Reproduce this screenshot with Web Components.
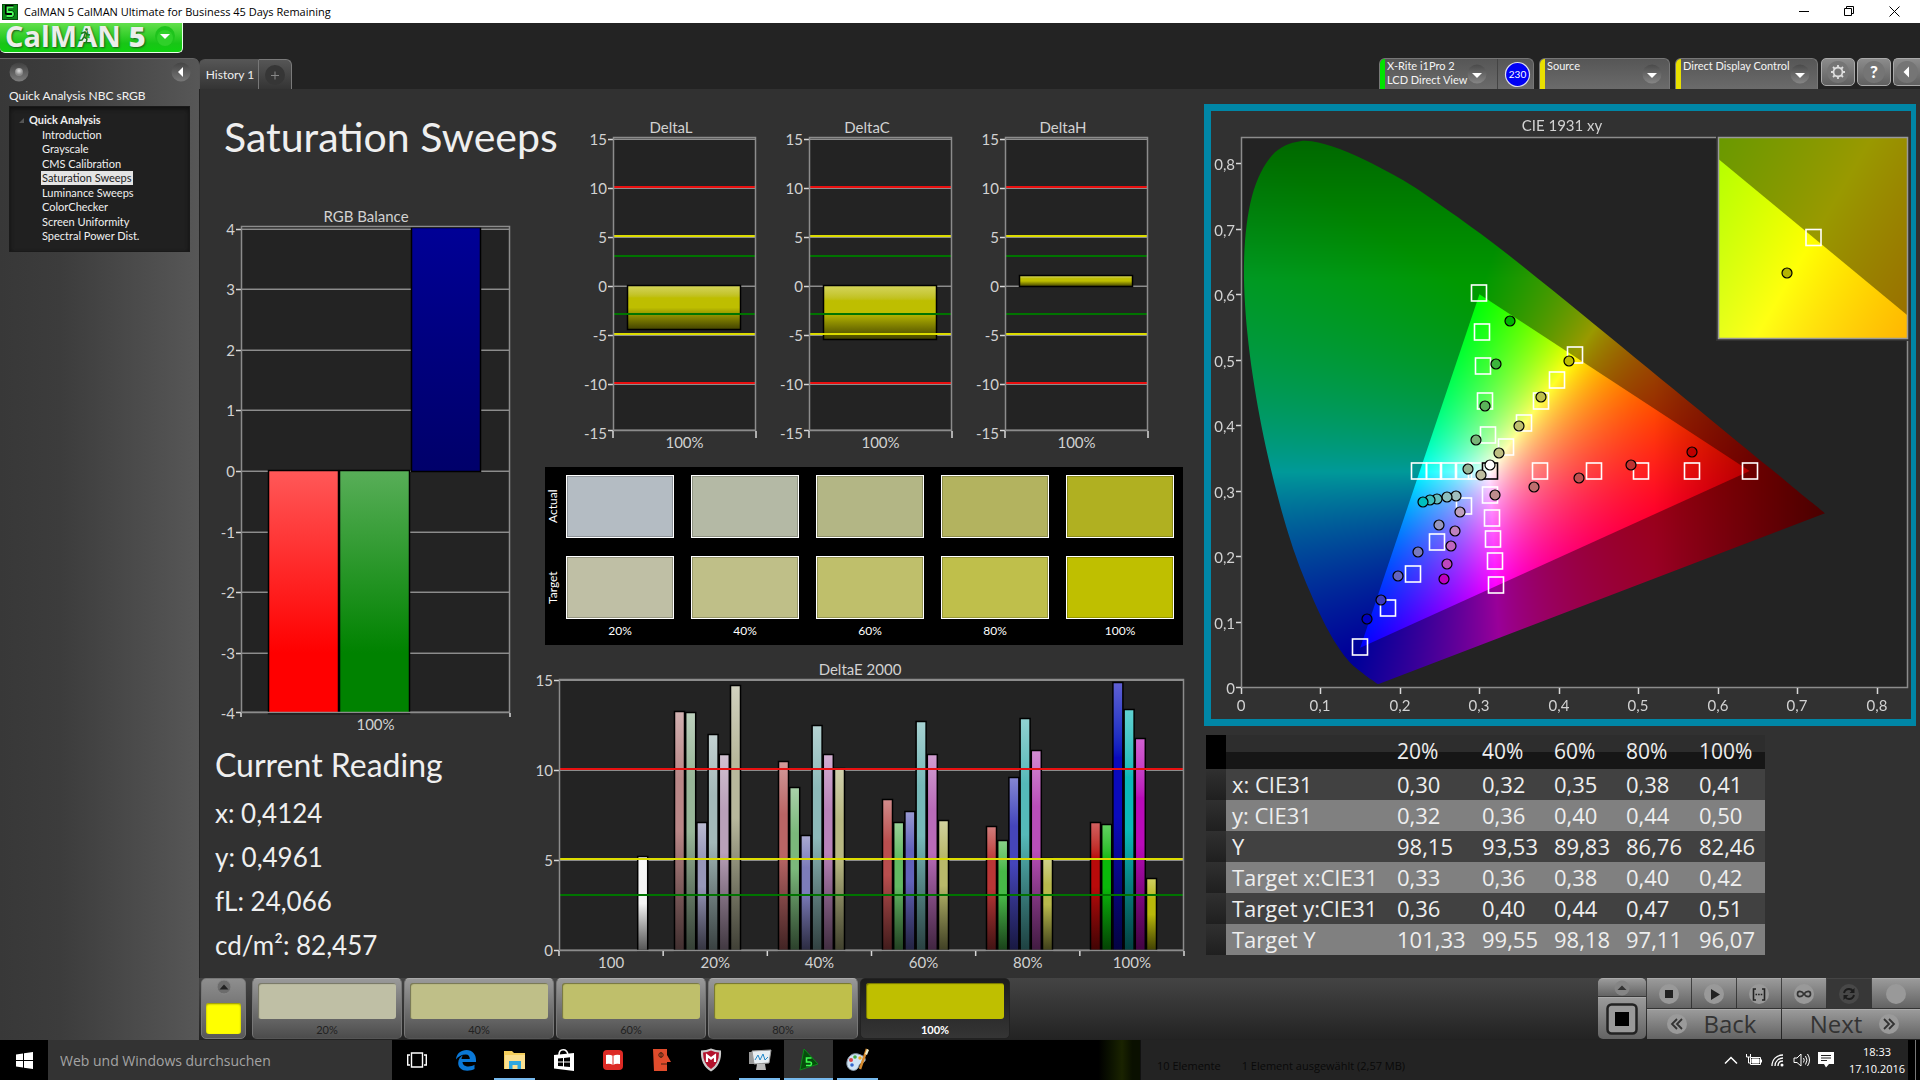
<!DOCTYPE html>
<html lang="en">
<head>
<meta charset="utf-8">
<title>CalMAN 5 CalMAN Ultimate for Business 45 Days Remaining</title>
<style>
  html, body { margin: 0; height: 100%; background: #000; }
  body { font-family: Lato, "Open Sans", sans-serif; color: #eee; overflow: hidden; }
</style>
</head>
<body>
<calman-app></calman-app>
<script>
const define = (name, css, html, init) => {
  const tpl = document.createElement('template');
  tpl.innerHTML = `<style>*{box-sizing:border-box}button{font:inherit;color:inherit;margin:0;padding:0;border:0;background:none}${css}</style>${html}`;
  customElements.define(name, class extends HTMLElement {
    constructor() {
      super();
      this.attachShadow({ mode: 'open' }).append(tpl.content.cloneNode(true));
    }
    connectedCallback() { if (init && !this.ready) { this.ready = true; init.call(this, this.shadowRoot); } }
  });
};

/* ---------- window title bar ---------- */
define('title-bar', `
  :host{display:flex;align-items:center;height:23px;background:#fff;color:#000;font:12px "Open Sans",sans-serif;padding-right:3px}
  .ico{width:16px;height:16px;margin:0 6px 0 2px}
  span{flex:1;font-size:11px}
  button{width:45px;height:23px;display:grid;place-items:center}
`, `
  <svg class="ico" viewBox="0 0 16 16"><rect width="16" height="16" fill="#064d0c"/><rect x="1" y="1" width="14" height="14" fill="#0a8a18"/><path d="M11.500 3H5v5.500h4.200q1.300 0 1.300 1.500t-1.300 1.500H4.500" fill="none" stroke="#000" stroke-width="4"/><path d="M11.500 3.500H5.500V8h4q1.500 0 1.500 2t-1.500 2H4.500" fill="none" stroke="#4dff5c" stroke-width="1.800"/></svg>
  <span>CalMAN 5 CalMAN Ultimate for Business 45 Days Remaining</span>
  <button aria-label="Minimize"><svg width="11" height="11"><path d="M0 5.500h10" stroke="#000"/></svg></button>
  <button aria-label="Restore"><svg width="11" height="11" fill="none" stroke="#000"><path d="M.5 2.500h7v7h-7zM2.500 2.500v-2h7v7h-2"/></svg></button>
  <button aria-label="Close"><svg width="11" height="11" fill="none" stroke="#000"><path d="M.5.5l10 10M10.500.5l-10 10"/></svg></button>
`);

/* ---------- brand menu ---------- */
define('brand-menu', `
  :host{display:block;height:35px}
  button{display:flex;align-items:center;width:183px;height:30px;padding:0 6px 4px 5px;background:linear-gradient(#63df4c,#18c516 70%,#0fd00f);border:1px solid #e8ffe8;border-top:0;border-left:0;border-radius:0 0 5px 5px}
  .name{position:relative;flex:1;display:flex;align-items:center;gap:8px;font:700 29px/26px "Open Sans",sans-serif;color:#eceeea;text-shadow:1px 1px 2px #1c5a1c}
  .run{position:absolute;left:72px;top:4px}
  .five{font-weight:800}
`, `
  <button aria-label="CalMAN 5 menu"><span class="name"><span>CalMAN</span><span class="five">5</span>
  <svg class="run" width="16" height="18" viewBox="0 0 16 18" fill="none" stroke="#1c7a20" stroke-width="1.500"><circle cx="9.500" cy="2.500" r="1.300" fill="#1c7a20" stroke="none"/><path d="M4 6.500l4-1.500 2 2.500 3 .5M8.500 5.500L7 10l3 2-1 4M7 10l-2 3-3.500.5"/></svg></span>
  <svg width="22" height="22" viewBox="0 0 22 22"><circle cx="11" cy="11" r="10" fill="#1ec41c"/><circle cx="11" cy="13" r="8" fill="#3fdc36" opacity=".5"/><path d="M6 9h10l-5 5z" fill="#fff"/></svg></button>
`);

/* ---------- workflow tree ---------- */
define('workflow-tree', `
  :host{display:block;width:199px;background:linear-gradient(90deg,#383838,#3c3c3c 30%,#575757);border-top:1px solid #666;border-radius:0 6px 0 0}
  .top{display:flex;justify-content:space-between;padding:3px 8px 0 9px;height:28px}
  .top button{width:20px;height:20px}
  h2{margin:0;padding:0 9px;font:12px/18px Lato,sans-serif;color:#f2f2f2}
  nav{margin:1px 9px 0;height:146px;background:#202020;border:1px solid #1a1a1a;box-shadow:inset 0 2px 4px #101010;padding:5px 0 5px 13px}
  .head{display:flex;align-items:center;gap:5px;font:700 11px/16px Lato,sans-serif}
  ul{list-style:none;margin:0;padding:0 0 0 18px;height:115px;display:flex;flex-direction:column;justify-content:space-between;align-items:flex-start}
  a{display:block;color:#f0f0f0;text-decoration:none;font:11px/14px Lato,sans-serif;padding:0 1px}
  a[aria-current]{background:#e4e4e4;color:#222}
`, `
  <div class="top">
    <button aria-label="Record"><svg width="20" height="20"><defs><linearGradient id="a" x2="0" y2="1"><stop stop-color="#404040"/><stop offset="1" stop-color="#7c7c7c"/></linearGradient><radialGradient id="b" cy=".35"><stop stop-color="#ddd"/><stop offset="1" stop-color="#888"/></radialGradient></defs><circle cx="10" cy="10" r="9.500" fill="url(#a)"/><circle cx="10" cy="10" r="4" fill="url(#b)"/></svg></button>
    <button aria-label="Collapse"><svg width="20" height="20"><defs><linearGradient id="c" x2="0" y2="1"><stop stop-color="#444"/><stop offset="1" stop-color="#777"/></linearGradient></defs><circle cx="10" cy="10" r="9.500" fill="url(#c)"/><path d="M12 5v10l-5-5z" fill="#fff"/></svg></button>
  </div>
  <h2>Quick Analysis NBC sRGB</h2>
  <nav><div class="head"><svg width="5" height="5" style="margin-left:-4px"><path d="M5 0v5H0z" fill="#555"/></svg><span>Quick Analysis</span></div>
  <ul><li><a href="#">Introduction</a></li><li><a href="#">Grayscale</a></li><li><a href="#">CMS Calibration</a></li><li><a href="#" aria-current="page">Saturation Sweeps</a></li><li><a href="#">Luminance Sweeps</a></li><li><a href="#">ColorChecker</a></li><li><a href="#">Screen Uniformity</a></li><li><a href="#">Spectral Power Dist.</a></li></ul></nav>
`);

/* ---------- device picker: coloured strip + label + drop arrow ---------- */
define('device-picker', `
  :host{display:flex;height:31px;background:linear-gradient(#565656,#6b6b6b);border:1px solid #777;border-bottom:0;border-radius:6px 6px 0 0;overflow:hidden}
  button{flex:1;display:flex;text-align:left;font:11px/14px Lato,sans-serif;color:#f4f4f4}
  i{width:5px;align-self:stretch;background:var(--strip,#e8e000);margin-right:2px}
  .t{flex:1;align-self:flex-start;white-space:nowrap}
  svg{align-self:center;margin:0 var(--arrow,7px) 0 0}
`, `
  <button><i></i><span class="t"><slot></slot></span><svg width="20" height="20"><defs><linearGradient id="a" x2="0" y2="1"><stop stop-color="#4a4a4a"/><stop offset="1" stop-color="#858585"/></linearGradient></defs><circle cx="10" cy="10" r="9.500" fill="url(#a)"/><path d="M5 9h10l-5 5z" fill="#fff"/></svg></button><slot name="extra"></slot>
`);

define('top-strip', `
  :host{display:flex;height:31px;align-items:flex-end;background:#232323}
  .tabs{display:flex;flex:1}
  .tab{height:30px;background:linear-gradient(#565656,#343434);border:1px solid #7a7a7a;border-bottom:0;font:12px/28px Lato,sans-serif;color:#eee}
  .tab:first-child{width:60px;padding-left:2px;border-radius:6px 0 0 0;border-color:#555 #777 #555 #555}
  .tab:last-child{width:33px;border-left:0;border-radius:0 6px 0 0;display:grid;place-items:center}
  .right{display:flex;gap:5px}
  .badge{width:37px;border-left:1px solid #444;display:grid;place-items:center;padding-left:4px}
  .tools{display:flex;gap:2px;margin-left:-2px}
  .tools button{width:34px;height:28px;border:1px solid #aaa;border-radius:5px;background:linear-gradient(#8c8c8c,#606060);display:grid;place-items:center}
  .tools button:last-child{width:27px;border-right:0;border-radius:5px 0 0 5px}
`, `
  <div class="tabs"><button class="tab">History 1</button><button class="tab" aria-label="Add history"><svg width="22" height="22"><circle cx="11" cy="11" r="10" fill="#363636"/><path d="M11 7.500v8M7 11.500h8" stroke="#888"/></svg></button></div>
  <div class="right">
    <device-picker style="--strip:#00e400;--arrow:10px;width:155px">X-Rite i1Pro 2<br>LCD Direct View<span slot="extra" class="badge"><svg width="27" height="27"><circle cx="13.500" cy="13.500" r="12" fill="#0000f5" stroke="#dde" stroke-width="1.200"/><text x="13.500" y="17" font-family="Lato" font-size="10" fill="#fff" text-anchor="middle">230</text></svg></span></device-picker>
    <device-picker style="width:131px">Source</device-picker>
    <device-picker style="width:143px;--arrow:10px">Direct Display Control</device-picker>
    <div class="tools">
      <button aria-label="Settings"><svg width="24" height="24"><circle cx="12" cy="12" r="11" fill="#757575"/><circle cx="12" cy="12" r="4.500" fill="none" stroke="#ddd" stroke-width="1.800"/><path d="M12 5v2.500M12 16.500V19M5 12h2.500M16.500 12H19M7 7l2 2M15 15l2 2M7 17l2-2M15 9l2-2" stroke="#ddd" stroke-width="1.800"/></svg></button>
      <button aria-label="Help"><svg width="24" height="24"><circle cx="12" cy="12" r="11" fill="#757575"/><text x="12" y="18" font-family="Lato" font-weight="900" font-size="17" fill="#fff" text-anchor="middle">?</text></svg></button>
      <button aria-label="Expand"><svg width="24" height="24"><circle cx="12" cy="12" r="11" fill="#757575"/><path d="M14 6.500v11L8.500 12z" fill="#fff"/></svg></button>
    </div>
  </div>
`);

/* ---------- bar charts ---------- */
const LIMITS = [[10, '#e81010'], [5, '#dcdc00'], [3, '#007400']];
const delta = (title, v) => ({
  w: 196, h: 340, title, tx: 99, plot: [41, 22, 184, 316], zero: 171, unit: 9.8, min: -15, max: 15, step: 5,
  cats: ['100%'], bars: [[14, 114, v, '#bebe00']], limits: LIMITS.concat([[-3, '#007400'], [-5, '#dcdc00'], [-10, '#e81010']]), tail: 7
});
const SWEEP = [
  [null, null, null, null, null, null, 5.2],
  [13.3, 13.2, 7.1, 12, 10.9, 14.7], [10.5, 9.05, 6.4, 12.5, 10.9, 10.1], [8.4, 7.1, 7.7, 12.7, 10.9, 7.2],
  [6.9, 6.1, 9.6, 12.9, 11.1, 5.1], [7.1, 7, 14.9, 13.4, 11.8, 4]
];
const HUES = [
  ['#fff', '#fff', '#fff', '#fff', '#fff', '#fff', '#f4f4f4'],
  ['#b98787', '#98b698', '#9797b9', '#a3b9b9', '#b9a0b9', '#b8b89c'], ['#b96565', '#7bb87b', '#7c7cba', '#8cb9b9', '#b983b9', '#b8b882'],
  ['#b94e4e', '#62b962', '#6262ba', '#76b9b9', '#b96bb9', '#b8b86a'], ['#b93636', '#48b948', '#4545ba', '#55b9b9', '#b94eb9', '#b8b84c'],
  ['#b90a0a', '#0ab90a', '#0a0abc', '#0ab9b9', '#b90ab9', '#b8b80a']
];
const CHARTS = {
  rgb: { w: 300, h: 530, title: 'RGB Balance', tx: 151, plot: [26, 21, 295, 508], zero: 266, unit: 60.6, min: -4, max: 4, step: 1, cats: ['100%'],
    bars: [[27, 71, -4.2, '#ff0000', '#ff5858', '#ff0000'], [98, 71, -4.2, '#008200', '#58ae58', '#008200'], [170, 70, 4.1, '#00007e', '#000096', '#00006a']], limits: [], tail: 4 },
  l: delta('DeltaL', -4.4), c: delta('DeltaC', -5.4), h: delta('DeltaH', 1.1),
  e: { w: 660, h: 315, title: 'DeltaE 2000', tx: 330, plot: [29, 24, 654, 296], zero: 295, unit: 18, min: 0, max: 15, step: 5, cats: ['100', '20%', '40%', '60%', '80%', '100%'],
    bars: SWEEP.flatMap((g, c) => g.map((v, i) => v && [c * 104 + 11 + i * 11.2, 11, v, HUES[c][i]]).filter(Boolean)), limits: LIMITS, tail: 5 }
};
define('bar-chart', `:host{display:block}svg{display:block;width:100%;height:auto}text{font:15px Lato,sans-serif;fill:#d2d2d2}`, ``, function (root) {
  const c = CHARTS[this.getAttribute('data-set')];
  const [l, t, r, b] = c.plot;
  const Y = v => Math.round(c.zero - v * c.unit);
  let s = `<text x="${c.tx}" y="${t - 4}" text-anchor="middle">${c.title}</text><rect x="${l}" y="${t}" width="${r - l}" height="${b - t}" fill="#232323"/>`, defs = '';
  for (let v = c.min; v <= c.max; v += c.step) {
    const y = Math.min(Y(v), b - 1);
    s += `<path d="M${l} ${y + .5}h${r - l}" stroke="#8c8c8c"/><path d="M${l} ${y - .5}h${r - l}" stroke="#545454"/><path d="M${l - 5} ${y + .5}h5" stroke="#d8d8d8" stroke-width="1.500"/><text x="${l - 6}" y="${Y(v) + 6}" text-anchor="end">${v}</text>`;
  }
  c.bars.forEach(([x, w, v, col, hi, lo], i) => {
    const top = Math.max(t + 1, v > 0 ? Y(v) : Y(0) - 1), bot = Math.min(b, v > 0 ? Y(0) : Y(v));
    const L = hi || `color-mix(in srgb, ${col} 65%, #fff)`, D = lo || `color-mix(in srgb, ${col} 35%, #000)`;
    defs += `<linearGradient id="g${i}" x2="0" y2="1"><stop style="stop-color:${L}"/><stop offset="${hi ? (v < 0 ? .75 : .5) : .28}" stop-color="${col}"/><stop offset="${hi ? 1 : .5}" stop-color="${hi ? lo : col}"/><stop offset="1" style="stop-color:${D}"/></linearGradient>`;
    s += `<rect x="${l + x + .5}" y="${top + .5}" width="${w - 1}" height="${bot - top}" fill="url(#g${i})" stroke="#000" stroke-width="1.500"/>`;
  });
  c.limits.forEach(([v, col]) => { s += `<path d="M${l} ${Y(v) - 1}h${r - l}" stroke="${col}" stroke-width="2"/>`; });
  s += `<rect x="${l + .5}" y="${t + .5}" width="${r - l - 1}" height="${b - t - 1}" fill="none" stroke="#8c8c8c" stroke-width="1.500"/>`;
  const cw = (r - l) / c.cats.length;
  c.cats.forEach((n, i) => { s += `<text x="${l + cw * (i + .5)}" y="${b + 17}" text-anchor="middle">${n}</text>`; });
  for (let i = 0; i <= c.cats.length; i++) s += `<path d="M${l + cw * i} ${b}v${c.tail}" stroke="#d8d8d8" stroke-width="1.500"/>`;
  root.innerHTML += `<svg viewBox="0 0 ${c.w} ${c.h}" role="img" aria-label="${c.title}"><defs>${defs}</defs>${s}</svg>`;
});

/* ---------- actual / target swatches ---------- */
define('swatch-panel', `
  :host{display:grid;grid-template-columns:4px repeat(5,1fr);column-gap:17px;row-gap:18px;grid-template-rows:63px 63px 14px;background:#000;padding:8px 9px 6px 0;font:12px/14px Lato,sans-serif;color:#fff;height:178px}
  .v{writing-mode:vertical-rl;transform:rotate(180deg);text-align:center;line-height:16px;width:16px}
  .n{text-align:center;margin-top:-13px}
  i{border:1px solid #fff;box-shadow:inset 0 0 0 1px #0003}
`, ``, function (root) {
  const rows = [['Actual', '#b4bcc3', '#b4b9a5', '#b3b685', '#b3b35f', '#b0b021'], ['Target', '#bfbfa5', '#bfbf88', '#bfbf6b', '#bfbf4b', '#bfbf00']];
  root.innerHTML += rows.map(([n, ...c]) => `<span class="v">${n}</span>` + c.map(k => `<i style="background:${k}"></i>`).join('')).join('')
    + '<span></span>' + ['20%', '40%', '60%', '80%', '100%'].map(n => `<span class="n">${n}</span>`).join('');
});

/* ---------- CIE 1931 diagram ---------- */
const LOCUS = [.1741,.0050,.1714,.0051,.1644,.0109,.1566,.0177,.1440,.0297,.1355,.0399,.1241,.0578,.1096,.0868,.0913,.1327,.0687,.2007,.0454,.2950,.0235,.4127,.0082,.5384,.0039,.6548,.0139,.7502,.0389,.8120,.0743,.8338,.1142,.8262,.1547,.8059,.1929,.7816,.2296,.7543,.3016,.6923,.3731,.6245,.4441,.5547,.5125,.4866,.5752,.4242,.6270,.3725,.6658,.3340,.6915,.3083,.7190,.2809,.7347,.2653];
const TARGETS = [[.299,.602],[.303,.543],[.305,.491],[.307,.437],[.311,.385],[.42,.507],[.397,.469],[.377,.437],[.356,.403],[.333,.367],[.224,.33],[.243,.33],[.261,.33],[.28,.33],[.296,.33],[.376,.33],[.444,.33],[.503,.33],[.568,.33],[.64,.33],[.281,.2765],[.247,.2215],[.217,.172],[.185,.12],[.15,.061],[.3137,.294],[.3154,.258],[.317,.226],[.3195,.1925],[.3206,.156]];
const ACTUALS = [[.3385,.559,'#00b400'],[.3206,.493,'#3cb43c'],[.3068,.43,'#5ab45a'],[.296,.377,'#78b478'],[.286,.333,'#96b496'],[.4125,.498,'#bebe00'],[.377,.443,'#bebe4b'],[.35,.399,'#bebe6e'],[.3247,.357,'#bebe82'],[.3016,.324,'#bebea0'],[.568,.3595,'#be0000'],[.491,.339,'#be3232'],[.425,.319,'#be5050'],[.3686,.3055,'#be6e6e'],[.3195,.294,'#be8c8c'],[.1589,.104,'#0000be'],[.176,.133,'#3c3cbe'],[.1976,.1696,'#6464be'],[.223,.206,'#7878be'],[.249,.247,'#9696be'],[.2553,.165,'#be00be'],[.2594,.188,'#be46be'],[.264,.2154,'#be64be'],[.2698,.238,'#be82be'],[.2756,.267,'#bea0be'],[.27,.292,'#a0bebe'],[.2594,.29,'#8cbebe'],[.2467,.2877,'#64bebe'],[.238,.286,'#3cbebe'],[.2293,.283,'#00bebe'],[.3137,.339,'#ffffff']];
define('cie-diagram', `
  :host{display:grid;border:7px solid #0086a6;border-right-width:5px;background:#313131}
  canvas,svg{grid-area:1/1;display:block;width:100%;height:auto}
  text{font:15px Lato,sans-serif;fill:#d2d2d2}
`, `<canvas width="700" height="608"></canvas>`, function (root) {
  const cv = root.querySelector('canvas'), g = cv.getContext('2d');
  /* paints one view of the chromaticity plane: ux, uy are pixels per unit, ox, oy the pixel of the origin */
  const paint = (x0, y0, w, h, ox, oy, ux, uy, clipLocus) => {
    const layer = k => {
      const o = document.createElement('canvas'); o.width = w; o.height = h;
      const q = o.getContext('2d'), im = q.createImageData(w, h);
      for (let j = 0, p = 0; j < h; j++) for (let i = 0; i < w; i++, p += 4) {
        const x = (x0 + i + .5 - ox) / ux, y = Math.max((oy - y0 - j - .5) / uy, .001), z = 1 - x - y;
        const R = Math.max(0, 3.2406 * x - 1.5372 * y - .4986 * z), G = Math.max(0, -.9689 * x + 1.8758 * y + .0415 * z), B = Math.max(0, .0557 * x - .2040 * y + 1.0570 * z);
        /* the far red and the far green end both fade towards dark */
        const fade = Math.min(1, 1 - (x - .52) * 2.4) * Math.min(1, 1 - (y - .62) * 1.5);
        const m = 255 * k * fade / Math.max(R, G, B, .0001);
        im.data[p] = R * m; im.data[p + 1] = G * m; im.data[p + 2] = B * m; im.data[p + 3] = 255;
      }
      q.putImageData(im, 0, 0); return o;
    };
    const P = (x, y) => [ox + x * ux, oy - y * uy];
    g.save(); g.beginPath(); g.rect(x0, y0, w, h); g.clip();
    if (clipLocus) {
      const n = LOCUS.length / 2, pt = i => { i = Math.max(0, Math.min(n - 1, i)); return P(LOCUS[2 * i], LOCUS[2 * i + 1]); };
      g.beginPath(); g.moveTo(...pt(0));
      for (let i = 0; i < n - 1; i++) {
        const a = pt(i - 1), b = pt(i), c = pt(i + 1), d = pt(i + 2);
        g.bezierCurveTo(b[0] + (c[0] - a[0]) / 6, b[1] + (c[1] - a[1]) / 6, c[0] - (d[0] - b[0]) / 6, c[1] - (d[1] - b[1]) / 6, c[0], c[1]);
      }
      g.closePath(); g.clip();
    }
    g.drawImage(layer(.6), x0, y0);
    g.beginPath(); g.moveTo(...P(.64, .33)); g.lineTo(...P(.3, .6)); g.lineTo(...P(.15, .06)); g.closePath(); g.clip();
    g.drawImage(layer(1), x0, y0);
    g.restore();
  };
  g.fillStyle = '#232323'; g.fillRect(30, 26, 667, 550);
  paint(30, 26, 667, 550, 30, 576, 794.8, 654.6, true);
  g.fillStyle = '#313131'; g.fillRect(505, 25, 195, 205);
  const ux = 3790, uy = 3950;
  paint(508, 26, 189, 201, 602.5 - .4193 * ux, 126.5 + .5053 * uy, ux, uy, false);
  const X = x => Math.round(30 + x * 794.8), Y = y => Math.round(576 - y * 654.6);
  const sq = (x, y, c) => `<rect x="${x - 7.5}" y="${y - 8}" width="15" height="16" fill="none" stroke="${c}" stroke-width="1.600"/>`;
  const dot = (x, y, c) => `<circle cx="${x}" cy="${y}" r="5" fill="${c}" stroke="#000" stroke-width="1.200"/>`;
  let s = `<text x="351" y="20" text-anchor="middle">CIE 1931 xy</text><path d="M505 26.500H30.500V576.500H696.500V230" fill="none" stroke="#8c8c8c" stroke-width="1.500"/><rect x="507.500" y="26.500" width="189" height="201" fill="none" stroke="#999" stroke-width="1.500"/>`;
  for (let i = 0; i <= 8; i++) {
    const n = i ? '0,' + i : '0';
    s += `<path d="M25 ${Y(i / 10) + .5}h5M${X(i / 10) + .5} 577v6" stroke="#d8d8d8" stroke-width="1.500"/><text x="24" y="${Y(i / 10) + 7}" text-anchor="end">${n}</text><text x="${X(i / 10)}" y="600" text-anchor="middle">${n}</text>`;
  }
  TARGETS.forEach(([x, y]) => { s += sq(X(x), Y(y), '#fff'); });
  s += sq(X(.3127), Y(.33), '#000');
  ACTUALS.forEach(([x, y, c]) => { s += dot(X(x), Y(y), c); });
  s += sq(602.5, 126.5, '#fff') + dot(576, 162, '#b4b400');
  cv.insertAdjacentHTML('afterend', `<svg viewBox="0 0 700 608" role="img" aria-label="CIE 1931 xy">${s}</svg>`);
});

/* ---------- readings table ---------- */
define('reading-table', `
  :host{display:block;font:22px/24px "Open Sans","Noto Sans",sans-serif;color:#eee}
  table{border-collapse:collapse;table-layout:fixed;width:559px}
  th,td{font-weight:400;text-align:left;padding:0 0 2px 6px;height:31px;white-space:nowrap}
  thead th{height:34px;font-size:21px;background:linear-gradient(#2d2d2d 50%,#161616 50%)}
  tbody tr{background:#414141}
  tbody tr:nth-child(even){background:#808080}
  .k{padding:0;background:linear-gradient(#303030,#1f1f1f)}
  thead .k{background:#000}
`, `<table><colgroup><col style="width:20px"><col style="width:165px"><col style="width:85px"><col style="width:72px"><col style="width:72px"><col style="width:73px"><col style="width:72px"></colgroup><thead></thead><tbody></tbody></table>`, function (root) {
  root.querySelector('thead').innerHTML = '<tr><td class="k"></td><th></th>' + ['20%', '40%', '60%', '80%', '100%'].map(x => `<th scope="col">${x}</th>`).join('') + '</tr>';
  root.querySelector('tbody').innerHTML = `x: CIE31|0,30|0,32|0,35|0,38|0,41
y: CIE31|0,32|0,36|0,40|0,44|0,50
Y|98,15|93,53|89,83|86,76|82,46
Target x:CIE31|0,33|0,36|0,38|0,40|0,42
Target y:CIE31|0,36|0,40|0,44|0,47|0,51
Target Y|101,33|99,55|98,18|97,11|96,07`.split('\n').map(r => { const [h, ...c] = r.split('|'); return `<tr><td class="k"></td><th scope="row">${h}</th>${c.map(x => `<td>${x}</td>`).join('')}</tr>`; }).join('');
});

/* ---------- bottom strip ---------- */
define('level-button', `
  :host{display:block;width:150px;height:61px}
  button{width:100%;height:100%;display:flex;flex-direction:column;align-items:center;padding:4px 5px 0;border-radius:5px;background:linear-gradient(#999,#4c4c4c);border:1px solid #777;border-top-color:#aaa;border-bottom-color:#555;font:11px/20px Lato,sans-serif;color:#222}
  i{width:100%;height:36px;flex:none;border-radius:3px;background:var(--c);box-shadow:inset 1px 1px 1px #0006;margin-bottom:1px}
  :host([current]) button{background:linear-gradient(#1c1c1c,#353535);border-color:#222;color:#fff;font-weight:700}
`, `<button><i></i><slot></slot></button>`);

define('level-strip', `
  :host{display:flex;height:62px;background:linear-gradient(#444,#232323);border-bottom:1px solid #222;padding-left:2px;gap:2px}
  .cur{width:45px;height:61px;margin-right:4px;border-radius:5px;background:linear-gradient(#8e8e8e,#585858);border:1px solid #777;display:flex;flex-direction:column;align-items:center;justify-content:space-between;padding:0 0 4px}
  .cur i{width:35px;height:31px;background:#ff0;border-radius:3px;box-shadow:inset 0 1px 2px #880}
  .gap{flex:1}
  .ctl{display:grid;grid-template-columns:48px repeat(5,44px) 1fr;grid-template-rows:30px 30px;gap:1px;width:322px}
  .ctl button{background:linear-gradient(#9a9a9a,#636363);border-top:1px solid #aaa;display:flex;align-items:center;justify-content:center;font:24px/28px "Open Sans",sans-serif;color:#333;gap:16px}
  .ctl .side{grid-row:1/3;display:grid;grid-template-rows:18px 1fr;gap:1px}
  .ctl .side button:first-child{border-radius:5px 5px 0 0}
  .ctl .side button:last-child{border-radius:0 0 5px 5px}
  .ctl .wide{grid-column:span 3;padding:0 6px 2px 0}
  .ctl .wide:last-child{padding:0 0 2px 8px}
  .ctl .on{background:#373737;border-top-color:#444}
`, `
  <button class="cur" aria-label="Current color"><svg width="16" height="16"><circle cx="8" cy="8" r="7" fill="#6c6c6c" stroke="#888"/><path d="M3.500 10.500L8 5.500l4.500 5z" fill="#222"/></svg><i></i></button>
  <level-button style="--c:#bfbfa5">20%</level-button><level-button style="--c:#bfbf88">40%</level-button><level-button style="--c:#bfbf6b">60%</level-button><level-button style="--c:#bfbf4b">80%</level-button><level-button current style="--c:#bfbf00">100%</level-button>
  <span class="gap"></span>
  <div class="ctl">
    <div class="side"><button aria-label="Show"><svg width="16" height="16"><circle cx="8" cy="8" r="7.500" fill="#858585"/><path d="M3.500 10L8 5.500l4.500 4.500z" fill="#333"/></svg></button><button aria-label="Window pattern"><svg width="32" height="32"><rect x="1.500" y="1.500" width="29" height="29" rx="4" fill="#999" stroke="#222" stroke-width="2.500"/><rect x="9" y="9" width="14" height="14" fill="#000"/></svg></button></div>
    <button aria-label="Stop"><svg width="22" height="22"><circle cx="11" cy="11" r="10" fill="#999"/><path d="M7 7h8v8H7z" fill="#222"/></svg></button>
    <button aria-label="Play"><svg width="22" height="22"><circle cx="11" cy="11" r="10" fill="#999"/><path d="M8 6l9 5.500L8 17z" fill="#222"/></svg></button>
    <button aria-label="Read range"><svg width="22" height="22"><circle cx="11" cy="11" r="10" fill="#999"/><path d="M8 6H5.500v11H8M14 6h2.500v11H14" fill="none" stroke="#222" stroke-width="1.600"/><path d="M7.500 11.500h7" stroke="#222" stroke-width="1.600" stroke-dasharray="1.600 1"/></svg></button>
    <button aria-label="Continuous"><svg width="22" height="22"><circle cx="11" cy="11" r="10" fill="#999"/><path d="M11 11C8.500 7.500 4.500 7.500 4.500 11S8.500 14.500 11 11s6.500-3.500 6.500 0S13.500 14.500 11 11z" fill="none" stroke="#333" stroke-width="1.700"/></svg></button>
    <button class="on" aria-label="Refresh"><svg width="22" height="22"><circle cx="11" cy="11" r="10" fill="#484848"/><path d="M6 10q1-4 5-4 2.500 0 4 2M16 12q-1 4-5 4-2.500 0-4-2" fill="none" stroke="#1c1c1c" stroke-width="2"/><path d="M16.500 5v5h-5zM5.500 17v-5h5z" fill="#1c1c1c"/></svg></button>
    <button aria-label="Idle"><svg width="22" height="22"><circle cx="11" cy="11" r="10" fill="#999"/></svg></button>
    <button class="wide"><svg width="22" height="22"><circle cx="11" cy="11" r="10" fill="#9a9a9a"/><path d="M11 6l-5 5 5 5M16 6l-5 5 5 5" fill="none" stroke="#333" stroke-width="1.800"/></svg>Back</button>
    <button class="wide">Next<svg width="22" height="22"><circle cx="11" cy="11" r="10" fill="#9a9a9a"/><path d="M6 6l5 5-5 5M11 6l5 5-5 5" fill="none" stroke="#333" stroke-width="1.800"/></svg></button>
  </div>
`);

/* ---------- Windows task bar ---------- */
define('task-bar', `
  :host{display:flex;height:40px;background:#000;color:#fff;font:12px "Open Sans",sans-serif}
  button{width:49px;height:40px;display:grid;place-items:center}
  input{width:344px;height:40px;border:0;background:#333;color:#ccc;padding:0 12px;font:14px "Open Sans",sans-serif;outline:0}
  input::placeholder{color:#a4a4a4;opacity:1}
  .run{border-bottom:2px solid #76b9ed;width:41px;margin:0 4px}
  .run svg{margin-top:2px}
  .act{background:#333;width:49px;margin:0}
  .glow{width:258px;flex:none;background:linear-gradient(90deg,#000 84%,#0a1000 88%,#1a2300 93%,#0a1000 97%)}
  .ghost{flex:1;background:#232323;display:flex;gap:21px;padding:18px 0 0 16px;font-size:11px;color:#090909;white-space:nowrap;border-left:1px solid #111}
  .tray{display:flex;align-items:center;gap:7px;background:#232323}
  .clock{width:62px;text-align:center;font-size:11px;line-height:17px;margin-left:4px}
  .edge{width:12px;background:#000}
  .edge::before{content:"";display:block;width:1px;height:40px;margin-left:7px;background:#777}
`, `
  <button style="width:48px" aria-label="Start"><svg width="17" height="17" fill="#fff"><path d="M0 2.400L7 1.400V8H0zM8 1.200L17 0v8H8zM0 9h7v6.600l-7-1zM8 9h9v8l-9-1.200z"/></svg></button>
  <input aria-label="Search" placeholder="Web und Windows durchsuchen">
  <button aria-label="Task View"><svg width="20" height="16" fill="none" stroke="#fff" stroke-width="1.400"><path d="M4.500 1h11v14h-11zM3 3H.7v10H3M17 3h2.300v10H17"/></svg></button>
  <button aria-label="Edge"><svg width="22" height="22" viewBox="0 0 22 22"><path d="M1 10.500C1.500 4.500 6 1 11.500 1 17.500 1 21 5.500 21 11v2H7.500c.2 3 2.800 4.500 6 4.500 2.300 0 4.300-.6 6-1.700V20c-2 1-4.500 1.700-7.300 1.700-5.500 0-9-3-9-7.700 0-3.500 2-6.300 5-7.700-1 1-1.600 2.300-1.700 3.700h8.300c0-2.700-1.300-4.500-4-4.500C6.500 5.500 3 7.500 1 10.500z" fill="#0a78d7"/></svg></button>
  <button class="run" aria-label="Explorer"><svg width="22" height="20"><path d="M0 1h8l2 2h11v16H0z" fill="#f5cf5c"/><path d="M1 5h20v14H1z" fill="#fbe08f"/><path d="M5 19v-8h12v8h-3.500v-4h-5v4z" fill="#2ea8e0"/></svg></button>
  <button aria-label="Store"><svg width="22" height="24"><path d="M1 7l20-2v18L1 20.500z" fill="#fff"/><path d="M6 7c0-7 8-7 9 0" fill="none" stroke="#fff" stroke-width="1.600"/><path d="M5 10.500l5-.5v3.600H5zM11 10l6-.7v4.300h-6zM5 14.600h5v3.700l-5-.4zM11 14.600h6V19l-6-.6z" fill="#000"/></svg></button>
  <button aria-label="Reader"><svg width="22" height="22"><rect x="1" y="1" width="20" height="20" rx="4" fill="#dd2a25"/><path d="M4 6q4-1 7 1 3-2 7-1v9q-4-1-7 1-3-2-7-1z" fill="#fff"/><path d="M11 7v9" stroke="#dd2a25"/></svg></button>
  <button aria-label="Face"><svg width="20" height="22"><path d="M1 0h14v6l4 7h-4v9H2z" fill="#e04c2c"/><circle cx="9" cy="6" r="2.200" fill="none" stroke="#421"/><path d="M9 3v6M9 15h6" stroke="#421"/></svg></button>
  <button aria-label="McAfee"><svg width="22" height="24"><path d="M1 2.500q5 0 10-2 5 2 10 2 1 14.500-10 21Q0 17 1 2.500z" fill="#ccc"/><path d="M3 4.500q4 0 8-2 4 2 8 2 0 11.500-8 16.500Q3 16 3 4.500z" fill="#b3122c"/><path d="M7 14V7.500l4 3 4-3V14" fill="none" stroke="#fff" stroke-width="2.200"/></svg></button>
  <button class="run" aria-label="Monitor"><svg width="24" height="22"><rect x="1" y="3" width="10" height="12" fill="#999"/><path d="M4 2l19-1-2 13-15 1z" fill="#e8eef2" stroke="#999"/><path d="M7 11l3-5 2 5 3-6 2 6 3-3" fill="none" stroke="#2288c8"/><path d="M9 15h8l1 6H8z" fill="#bbb"/></svg></button>
  <button class="run act" aria-label="CalMAN"><svg width="20" height="24"><path d="M5 1l14 15L1 22z" fill="#064d0c" stroke="#0a8a18"/><path d="M12.500 10H7.500v4h3.500q1.500 0 1.500 1.700T11 17.500H7" fill="none" stroke="#3fff4f" stroke-width="1.600"/></svg></button>
  <button class="run" aria-label="Paint"><svg width="24" height="24"><path d="M12 6C4 4 0 12 1 17s7 7 10 4 1-5 5-6 6-6-4-9z" fill="#cfe4f5" stroke="#89a"/><circle cx="5" cy="12" r="2" fill="#d44"/><circle cx="9" cy="9" r="1.800" fill="#4a4"/><circle cx="6" cy="17" r="1.800" fill="#36c"/><circle cx="14" cy="10" r="1.700" fill="#ea2"/><path d="M21 1l-7 20" stroke="#d68a2e" stroke-width="2.500"/><path d="M19 6l2-5 2 1-2 5z" fill="#eec"/></svg></button>
  <span class="glow"></span>
  <span class="ghost"><span>10 Elemente</span><span>1 Element ausgewählt (2,57 MB)</span></span>
  <div class="tray">
    <svg width="14" height="9"><path d="M1 7.500l6-6 6 6" fill="none" stroke="#fff" stroke-width="1.500"/></svg>
    <svg width="18" height="14" fill="none" stroke="#fff"><path d="M5.500 4.500h10v7h-10z"/><path d="M7 6h7v4H7z" fill="#fff"/><path d="M16.500 6.500v3M1.500 1v3h4V1M3.500 4v6h2"/></svg>
    <svg width="16" height="14" fill="none" stroke="#fff" stroke-width="1.300"><path d="M2 13C2 6 7 2 13 2M5 13c0-5 4-8 8-8M8 13c0-3 2-5 5-5"/><circle cx="12" cy="12" r="1.500" fill="#fff" stroke="none"/></svg>
    <svg width="18" height="14" fill="none" stroke="#fff"><path d="M1 5h3l4-4v12L4 9.500H1zM10.500 5q1.500 2 0 4.500M12.500 3q3 4 0 8.500M14.500 1q4 6 0 12"/></svg>
    <svg width="17" height="16"><path d="M0 0h16v12h-5l-3 3.500L6 12H0z" fill="#fff"/><path d="M3 3.500h10M3 6h10M3 8.500h6" stroke="#222"/></svg>
    <span class="clock">18:33<br>17.10.2016</span>
  </div>
  <span class="edge"></span>
`);

/* ---------- page ---------- */
define('analysis-page', `
  :host{display:grid;grid-template-columns:330fr 660fr 730fr;background:#313131;border-left:1px solid #222;min-width:0}
  section{min-width:0}
  h1{margin:0 0 38px;padding:18px 0 0 24px;font:41px/60px Lato,sans-serif;white-space:nowrap;color:#efefef}
  .a bar-chart{margin:0 15px}
  h2{margin:6px 0 2px;padding-left:15px;font:32px/48px Lato,sans-serif;color:#efefef;white-space:nowrap}
  p{margin:0;padding-left:15px;font:26px/44px Lato,sans-serif;color:#efefef}
  .b{padding-top:26px}
  .deltas{display:grid;grid-template-columns:repeat(3,1fr);margin:0 30px 0 42px}
  swatch-panel{margin:12px 7px 10px 15px}
  .c{padding:15px 4px 0 14px}
  reading-table{margin:9px 0 0 2px}
`, `
  <section class="a"><h1>Saturation Sweeps</h1><bar-chart data-set="rgb"></bar-chart><h2>Current Reading</h2><p>x: 0,4124</p><p>y: 0,4961</p><p>fL: 24,066</p><p>cd/m²: 82,457</p></section>
  <section class="b"><div class="deltas"><bar-chart data-set="l"></bar-chart><bar-chart data-set="c"></bar-chart><bar-chart data-set="h"></bar-chart></div><swatch-panel></swatch-panel><bar-chart data-set="e"></bar-chart></section>
  <section class="c"><cie-diagram></cie-diagram><reading-table></reading-table></section>
`);

define('calman-app', `
  :host{display:grid;grid-template-rows:auto auto 1fr auto;min-height:100vh;background:#232323}
  .work{display:grid;grid-template-columns:199px minmax(0,1fr)}
  .main{display:grid;grid-template-rows:auto 1fr auto}
`, `
  <title-bar></title-bar><brand-menu></brand-menu>
  <div class="work"><workflow-tree></workflow-tree><div class="main"><top-strip></top-strip><analysis-page></analysis-page><level-strip></level-strip></div></div>
  <task-bar></task-bar>
`);
</script>
</body>
</html>
